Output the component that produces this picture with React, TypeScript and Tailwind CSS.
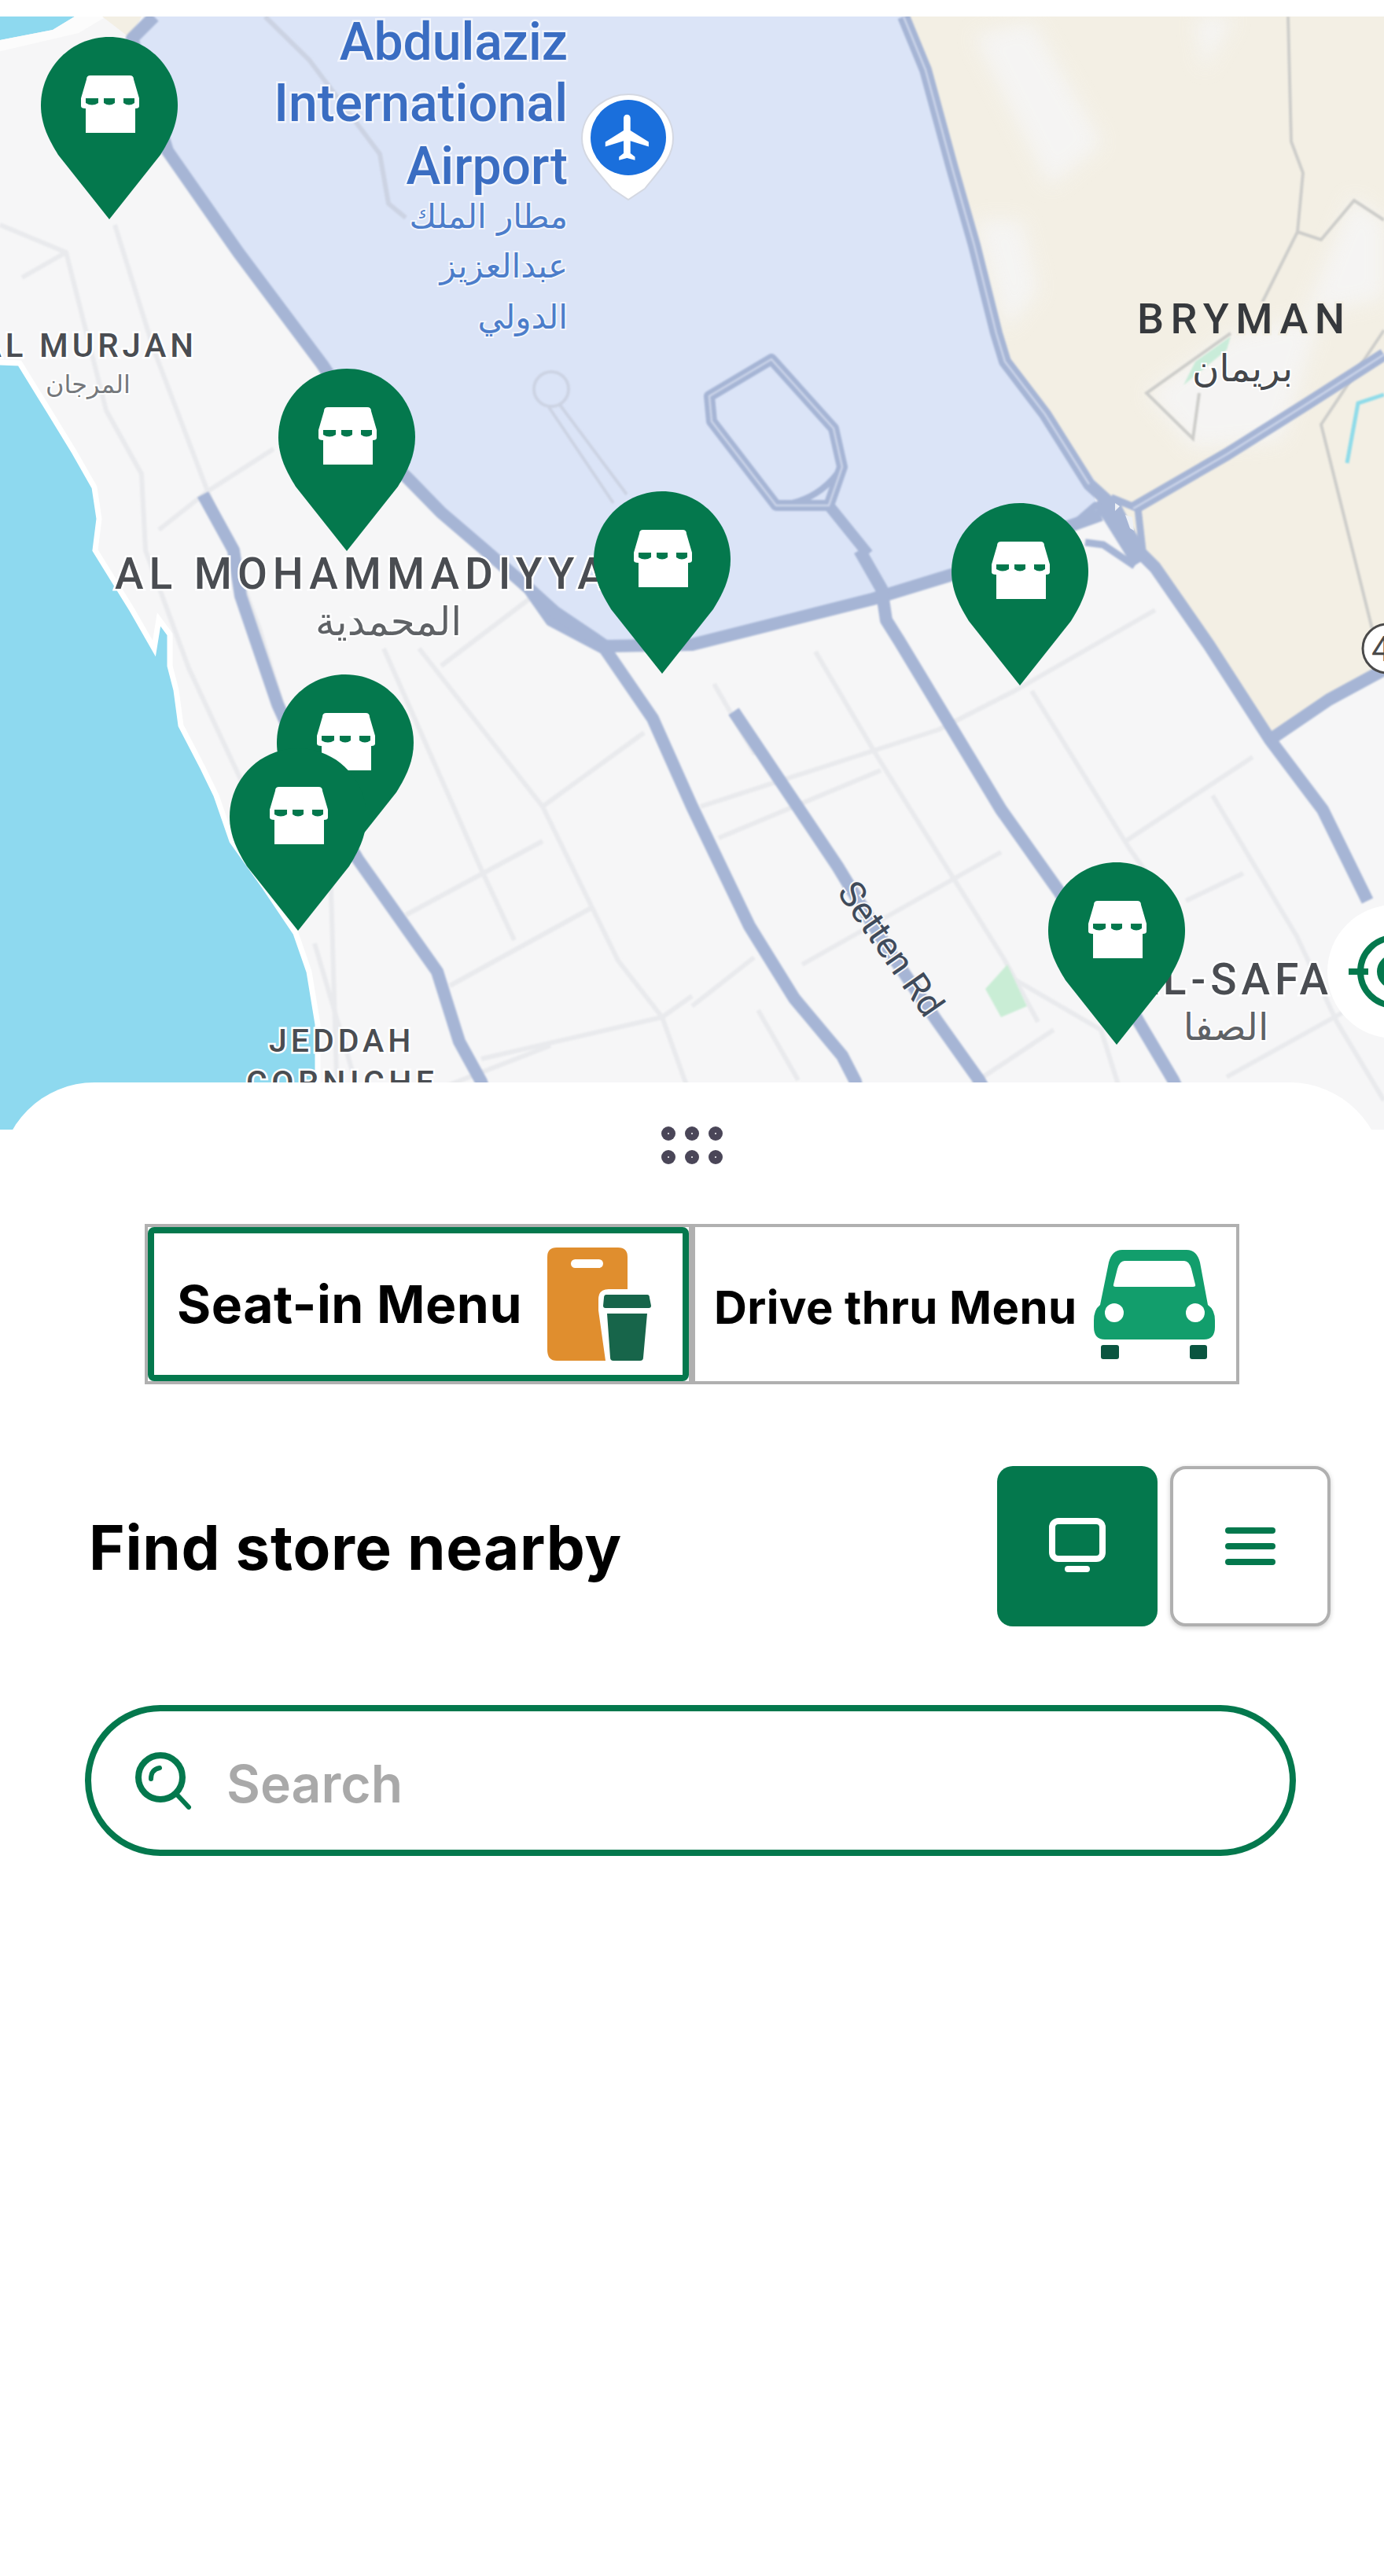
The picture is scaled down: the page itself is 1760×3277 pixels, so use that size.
const highways = [
  'M196 21 L168 49 L213 192 L303 321 L410 464 L480 570 L522 612 L561 652 L617 700 L673 749',
  'M673 749 L701 789 L769 825 L830 914 L880 1026 L953 1178 L1010 1270 L1071 1343 L1088 1376 L1100 1437',
  'M258 629 L297 700 L306 758 L353 896 L400 1000 L455 1093 L556 1236 L584 1325 L612 1376 L630 1437',
  'M673 749 L705 778 L770 822 L880 820 L1110 762 L1211 731 L1330 680 L1400 655',
  'M1149 21 L1177 89 L1211 214 L1239 312 L1267 424 L1278 460 L1329 527 L1385 616 L1419 647 L1447 700 L1469 722 L1537 820 L1615 941 L1682 1030 L1739 1146',
  'M1441 647 L1560 578 L1660 515 L1760 451',
  'M1615 941 L1690 890 L1760 852',
  'M1093 700 L1121 749 L1127 789 L1144 816 L1273 1030 L1346 1133 L1420 1250 L1447 1298 L1492 1374 L1520 1437',
  'M933 905 L1065 1102 L1130 1209 L1191 1298 L1245 1374 L1280 1437',
];

const minorRoads = [
  'M533 825 L690 1026 L786 1222 L842 1294 L880 1400',
  'M488 825 L612 1106 L654 1196',
  'M516 1164 L690 1070',
  'M572 1254 L752 1155',
  'M690 1026 L819 932',
  'M561 847 L673 762',
  'M612 1347 L842 1294 L880 1267',
  'M1037 829 L1116 963 L1278 1222 L1320 1300',
  'M908 870 L960 960',
  'M891 1026 L1194 928 L1290 879 L1469 776',
  'M914 1066 L1120 980',
  'M1020 1227 L1273 1084',
  'M1312 879 L1436 1079 L1500 1170',
  'M1430 1071 L1593 963',
  'M1542 1012 L1649 1191 L1700 1300 L1760 1400',
  'M1508 1146 L1581 1111',
  'M880 1280 L959 1218',
  'M964 1285 L1015 1374',
  'M1280 1240 L1400 1310 L1440 1437',
  'M1150 1437 L1340 1310',
  'M1560 1370 L1740 1270',
  'M146 286 L196 446 L264 625 L330 800 L420 1100 L430 1437',
  'M0 286 L84 321 L28 353',
  'M84 321 L135 522 L180 603 L185 700 L240 850 L310 1000',
  'M264 625 L348 571',
  'M202 674 L264 625',
  'M400 1200 L470 1437',
  'M520 1400 L700 1330',
];

const pins = [
  { id: 'a', place: 'left-[52px] top-[26px]' },
  { id: 'b', place: 'left-[354px] top-[448px]' },
  { id: 'c', place: 'left-[755px] top-[604px]' },
  { id: 'd', place: 'left-[1210px] top-[619px]' },
  { id: 'e', place: 'left-[352px] top-[837px]' },
  { id: 'f', place: 'left-[292px] top-[931px]' },
  { id: 'g', place: 'left-[1333px] top-[1076px]' },
];

function MapPin({ place }: { place: string }) {
  return (
    <svg className={`absolute ${place} h-[232px] w-[174px] overflow-visible`} viewBox="0 0 174 232">
      <path
        d="M87 0C135 0 174 39 174 87C174 112 163 132 152 150L87 232L22 150C11 132 0 112 0 87C0 39 39 0 87 0Z"
        fill="#04784d"
      />
      <path d="M58 54Q58 49 63 49H113Q118 49 118 54L125 78V88Q125 91 120 91V122H57V91Q51 91 51 88V78Z" fill="#fff" />
      <path d="M57 78H73V84Q65 89 57 84ZM80 78H94V84Q87 89 80 84ZM105 78H119V84Q112 89 105 84Z" fill="#04784d" />
    </svg>
  );
}

function StreetMap() {
  return (
    <svg className="absolute left-0 top-0 h-[1416px] w-[1760px]" viewBox="0 21 1760 1416">
      <defs>
        <filter id="soft">
          <feGaussianBlur stdDeviation="12" />
        </filter>
        <filter id="tiny">
          <feGaussianBlur stdDeviation="1" />
        </filter>
      </defs>
      <rect x="0" y="21" width="1760" height="1416" fill="#f6f6f7" />
      {/* desert */}
      <path d="M1149 21H1760V852L1615 941L1537 820L1469 722L1419 647L1329 527L1278 460L1239 312L1177 89Z" fill="#f3efe4" />
      <g fill="#f6f6f7" filter="url(#soft)" opacity="0.8">
        <path d="M1239 45L1312 27L1402 183L1335 237Z" />
        <path d="M1240 280L1300 280L1320 370L1280 420Z" />
        <path d="M1520 21H1570L1530 90Z" />
        <path d="M1458 500L1565 424L1680 400L1630 560L1517 570Z" />
        <path d="M1720 250L1760 280V380L1660 400Z" />
      </g>
      {/* airport */}
      <path d="M196 21H1149L1177 89L1211 214L1239 312L1267 424L1278 460L1329 527L1385 616L1400 655L1211 731L1110 762L880 820L770 822L673 749L561 652L410 464L303 321L213 192L168 49Z" fill="#dbe4f7" />
      {/* sea */}
      <path d="M-20 21H95L67 38L-20 55Z" fill="#8ed9ef" />
      <path d="M-20 460L25 462L62 522L95 576L120 620L126 660L121 700L168 776L196 825L202 788L216 807L216 847L224 878L230 923L258 977L275 1012L295 1070L337 1129L376 1187L393 1236L404 1303V1460H-20Z" fill="#8ed9ef" stroke="#ffffff" strokeWidth="7" />
      <path d="M95 21L67 38L-20 55V70L100 42L135 21Z" fill="#fcfcfc" />
      <path d="M130 21L180 21L165 48Z" fill="#f3efe4" />
      {/* small roads */}
      <g fill="none" stroke="#e9eaed" strokeWidth="6" strokeLinejoin="round" filter="url(#tiny)">
        {minorRoads.map((d) => (
          <path key={d} d={d} />
        ))}
      </g>
      {/* airport taxiways */}
      <g fill="none" stroke="#ccd3e3" strokeWidth="4" filter="url(#tiny)">
        <path d="M337 21L393 76L483 196L494 259L516 277" strokeWidth="6" />
        <circle cx="701" cy="495" r="22" />
        <path d="M712 515L797 629M698 518L780 640" />
      </g>
      {/* desert tracks */}
      <g fill="none" stroke="#cdcdca" strokeWidth="4" filter="url(#tiny)">
        <path d="M1638 21L1642 180L1657 220L1650 295L1605 385" />
        <path d="M1650 295L1680 305L1722 255L1760 280" />
        <path d="M1760 420L1680 540L1745 800" />
        <path d="M1565 424L1458 500L1517 558L1525 500" />
      </g>
      <path d="M1520 460L1565 428L1560 445L1505 490Z" fill="#c9ecd9" filter="url(#tiny)" />
      <path d="M1760 502L1727 513L1713 589" fill="none" stroke="#8fdbe9" strokeWidth="5" filter="url(#tiny)" />
      <path d="M1253 1258L1281 1227L1306 1280L1273 1294Z" fill="#c9edd5" filter="url(#tiny)" />
      {/* highways */}
      <g fill="none" stroke="#a6b5d5" strokeWidth="16" strokeLinejoin="round" filter="url(#tiny)">
        {highways.map((d) => (
          <path key={d} d={d} />
        ))}
        <path d="M981 457L902 504L905 536L987 643L1054 643L1071 594L1060 545Z" strokeWidth="14" />
        <path d="M1054 643L1104 705" strokeWidth="14" />
        <path d="M987 643Q1040 640 1071 594" strokeWidth="8" />
        <path d="M1400 635L1450 715" strokeWidth="22" />
        <path d="M1413 633L1447 647L1453 700" strokeWidth="9" />
        <path d="M1370 663L1393 643L1410 650M1380 690L1403 693L1443 720" strokeWidth="9" />
      </g>
      <g fill="none" stroke="#cdd6ea" strokeWidth="2.5" filter="url(#tiny)">
        <path d="M981 457L902 504L905 536L987 643L1054 643L1071 594L1060 545Z" />
        <path d="M1441 647L1560 578L1660 515L1760 451" />
        <path d="M1149 21L1177 89L1211 214L1239 312L1267 424L1278 460L1329 527L1385 616" />
      </g>
      <path d="M1431 655L1440 658L1442 675L1437 672ZM1418 640L1424 644L1418 650Z" fill="#eef1f6" />
      {/* labels */}
      <g fontFamily="Roboto, sans-serif" fontWeight="500" fill="#3a6dc2" stroke="#f2f5fc" strokeWidth="5" paintOrder="stroke" textAnchor="end" fontSize="66">
        <text x="722" y="76">Abdulaziz</text>
        <text x="722" y="154">International</text>
        <text x="722" y="234">Airport</text>
      </g>
      <g fontFamily="'DejaVu Sans', sans-serif" fill="#4c7dca" stroke="#f2f5fc" strokeWidth="4" paintOrder="stroke" textAnchor="end" fontSize="42">
        <text x="722" y="290">مطار الملك</text>
        <text x="722" y="353">عبدالعزيز</text>
        <text x="722" y="418">الدولي</text>
      </g>
      <g fontFamily="Roboto, sans-serif" fontWeight="500" fill="#4a4d52" stroke="#ffffff" strokeWidth="5" paintOrder="stroke">
        <text x="-26" y="454" fontSize="42" letterSpacing="5">AL MURJAN</text>
        <text x="1446" y="424" fontSize="54" letterSpacing="8.5" fill="#36393d" stroke="#f3efe4">BRYMAN</text>
        <text x="146" y="749" fontSize="55" letterSpacing="7">AL MOHAMMADIYYA</text>
        <text x="342" y="1338" fontSize="41" letterSpacing="5">JEDDAH</text>
        <text x="313" y="1391" fontSize="41" letterSpacing="5.5">CORNICHE</text>
        <text x="1695" y="1265" fontSize="55" letterSpacing="6" textAnchor="end">AL-SAFA</text>
      </g>
      <g fontFamily="'DejaVu Sans', sans-serif" fill="#5f6266" stroke="#ffffff" strokeWidth="4" paintOrder="stroke" textAnchor="middle">
        <text x="112" y="500" fontSize="32" fill="#75787c">المرجان</text>
        <text x="1580" y="485" fontSize="47" fill="#44474b">بريمان</text>
        <text x="494" y="808" fontSize="50">المحمدية</text>
        <text x="1559" y="1323" fontSize="48">الصفا</text>
      </g>
      <text
        x="1130"
        y="1209"
        fill="#3f4a5a"
        stroke="#f6f6f7"
        strokeWidth="4"
        paintOrder="stroke"
        fontFamily="Roboto, sans-serif"
        fontSize="46"
        textAnchor="middle"
        dominantBaseline="middle"
        transform="rotate(55 1130 1209)"
      >
        Setten Rd
      </text>
      {/* road shield */}
      <circle cx="1764" cy="825" r="31" fill="#fff" stroke="#4a4a4a" strokeWidth="3" />
      <text x="1744" y="841" fontSize="44" fill="#4a4a4a" fontFamily="Roboto, sans-serif">
        4
      </text>
      {/* airport marker */}
      <path d="M799 120C830 120 856 145 856 176C856 200 840 215 820 240L799 254L778 240C758 215 740 200 740 176C740 145 768 120 799 120Z" fill="#fff" stroke="#d4d8e2" strokeWidth="2" />
      <circle cx="799" cy="175" r="48" fill="#1a6fdc" />
      <g transform="translate(764 140) scale(2.9)">
        <path
          d="M21 16v-2l-8-5V3.5c0-.83-.67-1.5-1.5-1.5S10 2.67 10 3.5V9l-8 5v2l8-2.5V19l-2 1.5V22l3.5-1 3.5 1v-1.5L13 19v-5.5l8 2.5z"
          fill="#fff"
        />
      </g>
    </svg>
  );
}

function BagIcon() {
  return (
    <svg className="h-[144px] w-[132px] shrink-0" viewBox="0 0 132 144">
      <path d="M12 0H90Q102 0 102 12V53H78Q65 53 65 66V80L74 144H12Q0 144 0 130V12Q0 0 12 0Z" fill="#e08e2e" />
      <rect x="30" y="15" width="41" height="11" rx="5.5" fill="#fff" />
      <path d="M75 60H127Q130 60 130 64L132 74Q132 77 129 77H74Q71 77 71 74L72 64Q72 60 75 60Z" fill="#17654a" />
      <path d="M76 84H127L122 140Q122 144 118 144H84Q80 144 80 140Z" fill="#17654a" />
    </svg>
  );
}

function CarIcon() {
  return (
    <svg className="h-[139px] w-[154px] shrink-0" viewBox="0 0 154 139">
      <path
        d="M36 0H118Q131 0 135 16L145 70Q154 76 154 90V98Q154 114 140 114H14Q0 114 0 98V90Q0 76 8 70L19 16Q23 0 36 0Z"
        fill="#129e6c"
      />
      <path d="M39 14H115Q121 14 124 24L129 44Q130 47 126 47H28Q24 47 25 44L30 24Q33 14 39 14Z" fill="#fff" />
      <ellipse cx="26" cy="80" rx="12" ry="12" fill="#fff" />
      <ellipse cx="129" cy="80" rx="12" ry="12" fill="#fff" />
      <rect x="9" y="121" width="23" height="18" rx="3" fill="#0a5540" />
      <rect x="122" y="121" width="22" height="18" rx="3" fill="#0a5540" />
    </svg>
  );
}

function DragHandle() {
  return (
    <div className="mx-auto grid w-[78px] grid-cols-3 gap-3">
      {[1, 2, 3, 4, 5, 6].map((n) => (
        <span key={n} className="flex h-[18px] w-[18px] items-center justify-center rounded-full bg-[#4a4658]">
          <span className="h-0.5 w-0.5 rounded-full bg-white" />
        </span>
      ))}
    </div>
  );
}

export default function App() {
  return (
    <div className="min-h-[3277px] w-[1760px] overflow-hidden bg-white pt-[21px] font-['Inter',sans-serif] text-black">
      <div className="relative h-[1416px] overflow-hidden">
        <StreetMap />
        {pins.map((pin) => (
          <MapPin key={pin.id} place={pin.place} />
        ))}
        <div className="absolute left-[1688px] top-[1130px] flex h-[170px] w-[170px] items-center justify-center rounded-full bg-white">
          <svg className="h-[120px] w-[120px]" viewBox="0 0 120 120">
            <circle cx="60" cy="60" r="43" fill="none" stroke="#04784d" strokeWidth="8" />
            <circle cx="60" cy="60" r="22" fill="#04784d" />
            <path d="M2 60H27" stroke="#04784d" strokeWidth="8" />
          </svg>
        </div>
      </div>

      <div className="relative -mt-[60px] rounded-t-[120px] bg-white pt-[56px]">
        <DragHandle />

        <div className="mx-auto mt-[76px] flex h-[204px] w-[1392px] border-4 border-[#b0b0b0] bg-white">
          <button className="flex w-[688px] items-center justify-between rounded-lg border-8 border-[#04784d] pl-[29px] pr-[40px]">
            <span className="text-[66px] leading-none font-bold tracking-[0.5px]">Seat-in Menu</span>
            <BagIcon />
          </button>
          <button className="flex flex-1 items-center justify-between border-l-8 border-[#b0b0b0] pl-6 pr-[27px]">
            <span className="pt-2 text-[58px] leading-none font-bold tracking-[0.4px]">Drive thru Menu</span>
            <CarIcon />
          </button>
        </div>

        <div className="mt-[104px] flex items-center justify-between pl-[113px] pr-[68px]">
          <h1 className="pt-1 text-[78px] leading-none font-bold tracking-[0.7px]">Find store nearby</h1>
          <div className="flex gap-4">
            <button className="flex h-[204px] w-[204px] items-center justify-center rounded-[20px] bg-[#04784d]">
              <svg className="h-[72px] w-[72px]" viewBox="0 0 72 72" fill="none" stroke="#fff" strokeWidth="8" strokeLinecap="round">
                <rect x="4" y="4" width="64" height="48" rx="8" />
                <path d="M24 65H48" />
              </svg>
            </button>
            <button className="flex h-[204px] w-[204px] items-center justify-center rounded-[20px] border-4 border-[#b0b0b0] bg-white shadow-[0_2px_6px_rgba(0,0,0,0.2)]">
              <svg className="h-12 w-16" viewBox="0 0 64 48" fill="#04784d">
                <rect x="0" y="0" width="64" height="8" rx="4" />
                <rect x="0" y="20" width="64" height="8" rx="4" />
                <rect x="0" y="40" width="64" height="8" rx="4" />
              </svg>
            </button>
          </div>
        </div>

        <div className="ml-[108px] mt-[100px] flex h-[192px] w-[1540px] items-center gap-[44px] rounded-full border-8 border-[#04784d] pl-14">
          <svg className="h-[73px] w-[72px] shrink-0" viewBox="0 0 72 73" fill="none" stroke="#04784d" strokeLinecap="round">
            <circle cx="32" cy="32" r="28" strokeWidth="8" />
            <path d="M20 34Q20 22 31 20" strokeWidth="6" />
            <path d="M54 55L68 70" strokeWidth="6" />
          </svg>
          <input
            className="w-full bg-transparent pt-2 text-[66px] font-semibold text-[#a9a9a9] outline-none placeholder:text-[#a9a9a9]"
            placeholder="Search"
            readOnly
          />
        </div>
      </div>
    </div>
  );
}
